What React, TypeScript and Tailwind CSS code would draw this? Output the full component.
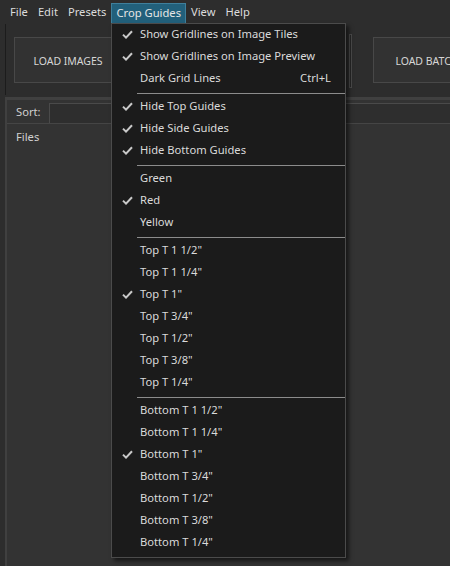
import React from "react";

type Item =
  | { kind: "item"; label: string; checked?: boolean; shortcut?: string }
  | { kind: "sep" };

const MENU: Item[] = [
  { kind: "item", label: "Show Gridlines on Image Tiles", checked: true },
  { kind: "item", label: "Show Gridlines on Image Preview", checked: true },
  { kind: "item", label: "Dark Grid Lines", shortcut: "Ctrl+L" },
  { kind: "sep" },
  { kind: "item", label: "Hide Top Guides", checked: true },
  { kind: "item", label: "Hide Side Guides", checked: true },
  { kind: "item", label: "Hide Bottom Guides", checked: true },
  { kind: "sep" },
  { kind: "item", label: "Green" },
  { kind: "item", label: "Red", checked: true },
  { kind: "item", label: "Yellow" },
  { kind: "sep" },
  { kind: "item", label: 'Top T 1 1/2"' },
  { kind: "item", label: 'Top T 1 1/4"' },
  { kind: "item", label: 'Top T 1"', checked: true },
  { kind: "item", label: 'Top T 3/4"' },
  { kind: "item", label: 'Top T 1/2"' },
  { kind: "item", label: 'Top T 3/8"' },
  { kind: "item", label: 'Top T 1/4"' },
  { kind: "sep" },
  { kind: "item", label: 'Bottom T 1 1/2"' },
  { kind: "item", label: 'Bottom T 1 1/4"' },
  { kind: "item", label: 'Bottom T 1"', checked: true },
  { kind: "item", label: 'Bottom T 3/4"' },
  { kind: "item", label: 'Bottom T 1/2"' },
  { kind: "item", label: 'Bottom T 3/8"' },
  { kind: "item", label: 'Bottom T 1/4"' },
];

function Check() {
  return (
    <svg width="11" height="9" viewBox="0 0 11 9" aria-hidden="true">
      <path
        d="M1 4.6 L4 7.6 L10 1.2"
        fill="none"
        stroke="#c9c9c9"
        strokeWidth="2"
      />
    </svg>
  );
}

function MenuBar() {
  const items = ["File", "Edit", "Presets", "Crop Guides", "View", "Help"];
  return (
    <div className="flex h-[24px] items-center pl-[5px]">
      {items.map((name) =>
        name === "Crop Guides" ? (
          <span
            key={name}
            className="mt-[3px] flex h-[21px] items-center border border-[#3f7f9b] bg-[#22607b] px-[4px] text-[#e6e6e6]"
          >
            {name}
          </span>
        ) : (
          <span key={name} className="px-[5px] leading-[24px]">
            {name}
          </span>
        ),
      )}
    </div>
  );
}

function ToolButton({ label }: { label: string }) {
  return (
    <div className="flex h-[46px] w-[108px] shrink-0 items-center justify-center border border-[#484848] bg-[#323232] pt-[3px] text-[10.5px] text-[#d6d6d6]">
      {label}
    </div>
  );
}

function Toolbar() {
  return (
    <div className="h-[71px] pl-[5px]">
      <div className="flex h-full items-start border-l border-[#1c1c1c] pl-[8px] pt-[13px]">
        <ToolButton label="LOAD IMAGES" />
        <div className="ml-[227px] mt-[-3px] h-[54px] w-[3px] shrink-0 border border-[#4a4a4a] bg-[#262626]" />
        <div className="ml-[21px]">
          <ToolButton label="LOAD BATCH" />
        </div>
      </div>
    </div>
  );
}

function FilesPanel() {
  return (
    <div className="h-[471px] pl-[5px] pt-[2px]">
      <div className="h-full border-l-2 border-t-[3px] border-[#404040] bg-[#333333]">
        <div className="flex h-[24px] items-end border-b border-[#454545]">
          <span className="mb-[2px] ml-[9px] text-[#d0d0d0]">Sort:</span>
          <div className="ml-[8px] h-[20px] flex-1 border-l border-t border-[#4a4a4a] bg-[#2e2e2e]" />
        </div>
        <div className="ml-[9px] mt-[5px] text-[#d0d0d0]">Files</div>
      </div>
    </div>
  );
}

function Dropdown() {
  return (
    <div className="absolute left-[111px] top-[23px] w-[235px] border border-[#4b4b4b] bg-[#1b1b1b] shadow-[3px_3px_4px_rgba(0,0,0,0.55)]">
      {MENU.map((it, i) =>
        it.kind === "sep" ? (
          <div key={i} className="flex h-[6px] items-center pl-[25px]">
            <div className="h-px w-full bg-[#8c8c8c]" />
          </div>
        ) : (
          <div
            key={i}
            className="flex h-[22px] items-start pr-[14px] leading-[20px] text-[#dadada]"
          >
            <span className="flex h-[20px] w-[28px] items-center justify-center pl-[3px]">
              {it.checked ? <Check /> : null}
            </span>
            <span className="flex-1">{it.label}</span>
            {it.shortcut ? <span>{it.shortcut}</span> : null}
          </div>
        ),
      )}
      <div className="h-[3px]" />
    </div>
  );
}

export default function App() {
  return (
    <div className="relative h-[566px] w-[450px] overflow-hidden bg-[#2d2d2d] font-['Noto_Sans',sans-serif] text-[11.2px] text-[#dcdcdc]">
      <MenuBar />
      <Toolbar />
      <FilesPanel />
      <Dropdown />
    </div>
  );
}
